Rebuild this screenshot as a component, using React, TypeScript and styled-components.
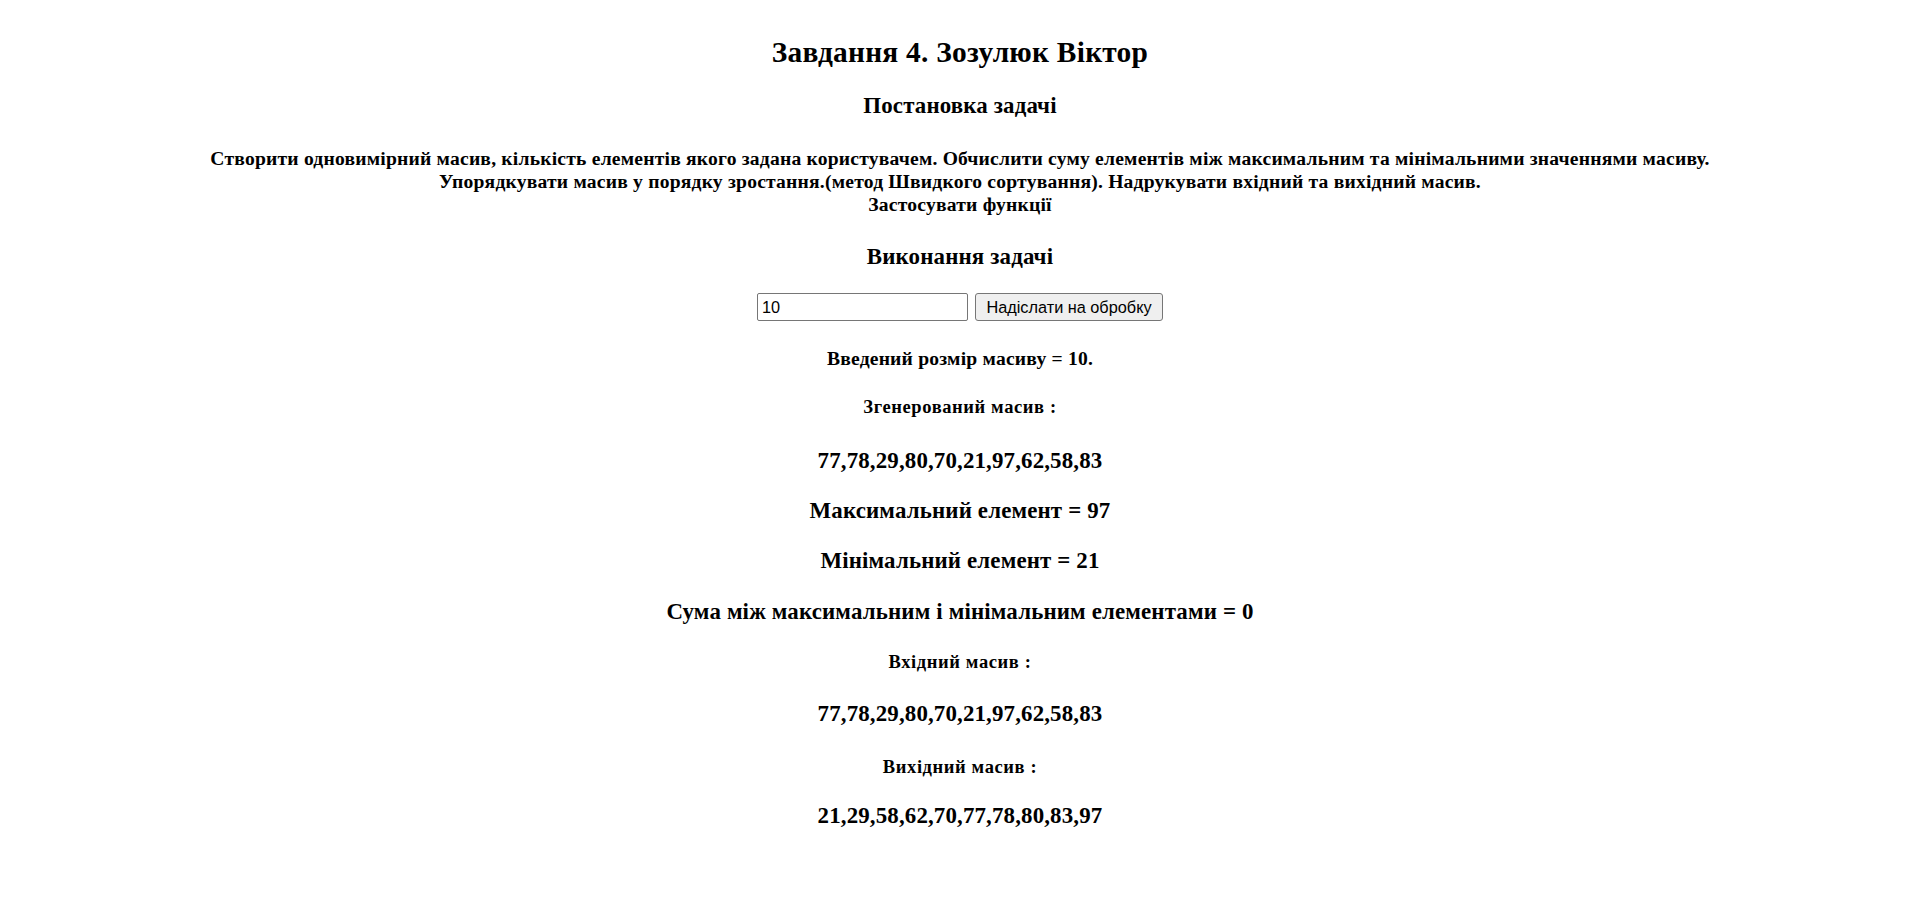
import React from 'react';
import styled, { createGlobalStyle } from 'styled-components';

const GlobalStyle = createGlobalStyle`
  html, body {
    margin: 0;
    padding: 0;
    background: #ffffff;
  }
  body {
    font-family: "Liberation Serif", "Times New Roman", serif;
    color: #000000;
  }
`;

const Page = styled.main`
  padding: 35px 10px 40px;
  text-align: center;
`;

const Title = styled.h2`
  margin: 0;
  font-size: 29.4px;
  line-height: 34px;
  font-weight: bold;
  letter-spacing: 0.25px;
`;

const Heading = styled.h3<{ $top: number }>`
  margin: ${(p) => p.$top}px 0 0;
  font-size: 22.9px;
  line-height: 26px;
  font-weight: bold;
  letter-spacing: 0.15px;
`;

const Text = styled.h4<{ $top: number }>`
  margin: ${(p) => p.$top}px 0 0;
  font-size: 19.6px;
  line-height: 23px;
  font-weight: bold;
  letter-spacing: 0.2px;
`;

const Label = styled.h5<{ $top: number }>`
  margin: ${(p) => p.$top}px 0 0;
  font-size: 18.5px;
  line-height: 19px;
  font-weight: bold;
  letter-spacing: 0.6px;
`;

const Form = styled.form`
  margin: 23px 0 0;
  display: flex;
  justify-content: center;
  gap: 7px;
`;

const SizeInput = styled.input`
  box-sizing: border-box;
  width: 211px;
  height: 28px;
  padding: 0 4px;
  border: 1px solid #767676;
  border-radius: 2px;
  font-family: "Liberation Sans", Arial, sans-serif;
  font-size: 16.3px;
  color: #000000;
  background: #ffffff;
  outline: none;
`;

const SubmitButton = styled.button`
  box-sizing: border-box;
  width: 188px;
  height: 28px;
  padding: 0 6px;
  border: 1px solid #767676;
  border-radius: 3px;
  background: #efefef;
  font-family: "Liberation Sans", Arial, sans-serif;
  font-size: 16.3px;
  color: #000000;
  cursor: pointer;
`;

const source = [77, 78, 29, 80, 70, 21, 97, 62, 58, 83];
const sorted = [...source].sort((a, b) => a - b);

const App: React.FC = () => {
  return (
    <>
      <GlobalStyle />
      <Page>
        <Title>Завдання 4. Зозулюк Віктор</Title>

        <Heading $top={24}>Постановка задачі</Heading>

        <Text $top={28}>
          Створити одновимірний масив, кількість елементів якого задана користувачем. Обчислити
          суму елементів між максимальним та мінімальними значеннями масиву.
          <br />
          Упорядкувати масив у порядку зростання.(метод Швидкого сортування). Надрукувати вхідний
          та вихідний масив.
          <br />
          Застосувати функції
        </Text>

        <Heading $top={28}>Виконання задачі</Heading>

        <Form onSubmit={(e) => e.preventDefault()}>
          <SizeInput type="text" defaultValue="10" />
          <SubmitButton type="submit">Надіслати на обробку</SubmitButton>
        </Form>

        <Text $top={26}>Введений розмір масиву = 10.</Text>

        <Label $top={28}>Згенерований масив :</Label>
        <Heading $top={31}>{source.join(',')}</Heading>

        <Heading $top={24}>Максимальний елемент = 97</Heading>
        <Heading $top={24}>Мінімальний елемент = 21</Heading>
        <Heading $top={25}>Сума між максимальним і мінімальним елементами = 0</Heading>

        <Label $top={28}>Вхідний масив :</Label>
        <Heading $top={29}>{source.join(',')}</Heading>

        <Label $top={31}>Вихідний масив :</Label>
        <Heading $top={26}>{sorted.join(',')}</Heading>
      </Page>
    </>
  );
};

export default App;
